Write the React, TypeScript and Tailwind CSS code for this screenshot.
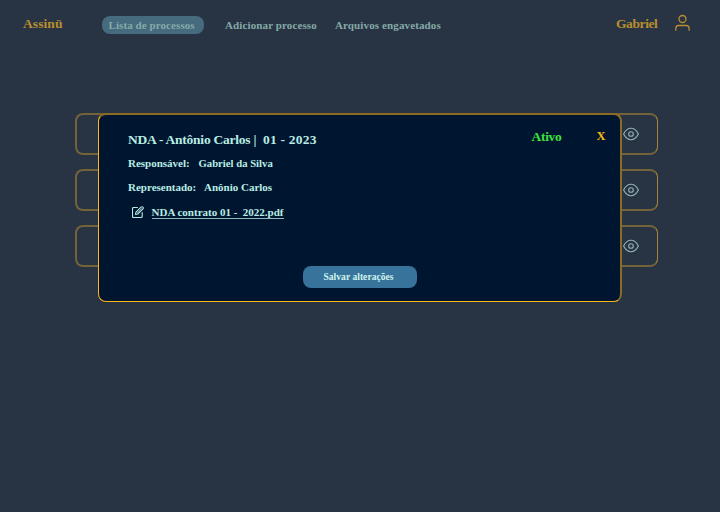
import React from 'react';

function EyeIcon() {
  return (
    <svg className="h-4 w-4" viewBox="0 0 16 16" fill="none" stroke="#8fb3b3" strokeWidth="1.100">
      <path d="M.6 8C2.400 4.500 5 2.300 8 2.300S13.600 4.500 15.400 8C13.600 11.500 11 13.700 8 13.700S2.400 11.500.6 8Z" />
      <circle cx="8" cy="8" r="2.300" />
    </svg>
  );
}

function UserIcon() {
  return (
    <svg className="h-[18px] w-4" viewBox="0 0 16 18" fill="none" stroke="#b98e2e" strokeWidth="1.300">
      <circle cx="8.500" cy="5" r="3.500" />
      <path d="M1.800 16.800V14.400Q1.800 11.500 4.700 11.500H12.200Q15.100 11.500 15.100 14.400V16.800" />
    </svg>
  );
}

function EditIcon() {
  return (
    <svg className="h-3 w-3" viewBox="0 0 12 12" fill="none" stroke="#b9ede4" strokeWidth="1.100" strokeLinejoin="round">
      <path d="M5.800 1.500H1.500Q.5 1.500.5 2.500V10.500Q.5 11.500 1.500 11.500H9Q10.200 11.500 10.200 10.500V6.300" />
      <path d="M3.500 8.500 4 6.200 9 1.100Q9.900.3 10.900 1.200T10.900 2.900L5.800 8Z" />
      <path d="M5 7 9.700 2.300" strokeWidth=".6" />
    </svg>
  );
}

function ProcessCard() {
  return (
    <li className="flex h-[42px] items-center justify-end rounded-[8px] border-2 border-r border-[#736339] border-r-[#a98531] pr-[18px]">
      <EyeIcon />
    </li>
  );
}

export default function App() {
  return (
    <div className="relative h-[512px] w-[720px] overflow-hidden bg-[#283444] font-['Liberation_Serif',serif] text-[11px] leading-4 font-bold whitespace-pre text-[#85aaa8]">
      <header className="flex h-[50px] items-start pl-[23px]">
        <div className="mt-[16px] w-[79px] text-[13.500px] tracking-[0.080px] text-[#b98e2e]">Assinü</div>
        <nav className="flex flex-1 items-start">
          <a className="mt-4 h-[18px] w-[102px] rounded-[8px] bg-[#466a7e] pl-[6.500px] leading-[18px] tracking-[0.080px]">Lista de processos</a>
          <a className="mt-[17px] ml-[21px] w-[110px] tracking-[0.120px]">Adicionar processo</a>
          <a className="mt-[17px] tracking-[0.120px]">Arquivos engavetados</a>
        </nav>
        <div className="mt-[16px] w-[58px] text-[13.500px] tracking-[-0.400px] text-[#b98e2e]">Gabriel</div>
        <div className="mt-[14px] w-[46px]"><UserIcon /></div>
      </header>

      <ul className="mt-[63px] mr-[62px] ml-[75px] flex flex-col gap-[14px]">
        <ProcessCard />
        <ProcessCard />
        <ProcessCard />
      </ul>

      <section role="dialog" className="absolute top-[113px] left-[98px] flex h-[189px] w-[524px] flex-col rounded-[8px] border-t-2 border-r-2 border-b border-l border-t-[#8c6c24] border-r-[#8c6c24] border-b-[#fdb813] border-l-[#fdb813] bg-[#001630] text-[#b9ede4]">
        <div className="flex pt-[16px] pl-[29px] text-[13.500px]">
          <h1 className="flex w-[403.500px] pt-px">
            <span className="w-[135px] tracking-[-0.240px]">NDA - Antônio Carlos |</span>
            <span className="tracking-[0.220px]">01 - 2023</span>
          </h1>
          <span className="-mt-[2px] w-[65px] tracking-[-0.300px] text-[#3de23d]">Ativo</span>
          <button className="-mt-[3px] h-4 text-[12.500px] leading-4 text-[#fdb813]">X</button>
        </div>
        <p className="mt-[7px] flex pl-[29px]">
          <span className="w-[70.500px]">Responsável:</span>
          <span className="text-[10.700px]">Gabriel da Silva</span>
        </p>
        <p className="mt-[8px] flex pl-[29px]">
          <span className="w-[76px]">Representado:</span>
          <span>Anônio Carlos</span>
        </p>
        <div className="mt-[9px] flex pl-[33px]">
          <div className="mt-[1.500px] w-[19.500px]"><EditIcon /></div>
          <a className="h-[15px] border-b border-[#8ebbbc]">NDA contrato 01 -  2022.pdf</a>
        </div>
        <button className="mt-[47px] ml-[204px] h-[22px] w-[114px] rounded-[8px] bg-[#37739a] pr-[3px] text-[9.500px] leading-[20px] tracking-[0.050px] text-[#d2f3ef]">Salvar alterações</button>
      </section>
    </div>
  );
}
